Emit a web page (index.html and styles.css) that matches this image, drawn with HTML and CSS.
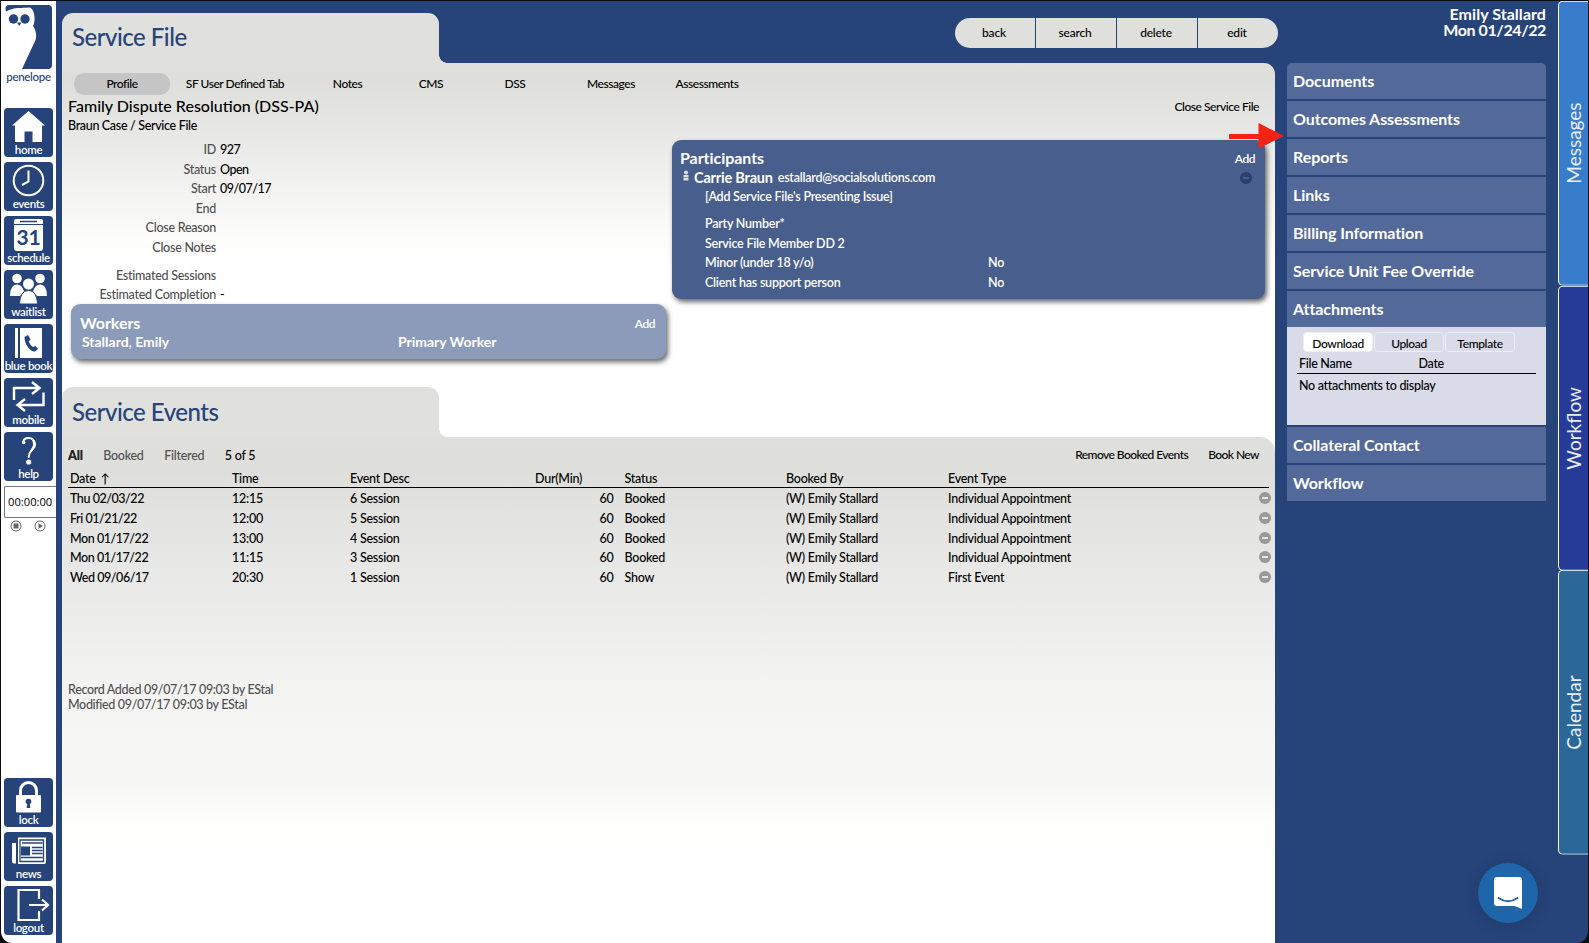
FILE: index.html
```html
<!DOCTYPE html>
<html lang="en">
<head>
  <meta charset="UTF-8" />
  <meta name="viewport" content="width=device-width, initial-scale=1.0" />
  <title>Penelope - Service File</title>
  <link rel="stylesheet" href="styles.css">
</head>
<body>
  <div class="app">
    <nav class="sidebar">
      <a class="logo">
        <svg width="48" height="65" viewBox="0 0 48 65">
          <path fill="#26437a" d="M4 0H43a4 4 0 0 1 4 4V60a4 4 0 0 1-4 4H17L30.500 35C32 31 31 25 28 21C30 18 30 11 28.500 7C27 3 25 2.500 24 2.500C18 3.500 9 1.500 1 6.500L0.500 4Q0.500 0 4 0Z"/>
          <circle cx="8.500" cy="14" r="4.700" fill="#26437a"/>
          <circle cx="20" cy="14" r="4.700" fill="#26437a"/>
          <path fill="#26437a" d="M12 17.500h4.500L14.200 21z"/>
        </svg>
        <span>penelope</span>
      </a>
      <div class="nav-group">
        <a class="nav-btn">
          <svg viewBox="0 0 49 49"><path fill="#fff" d="M24.500 3 41 17.500H38V34H28.500V23.500H20.500V34H11V17.500H8z"/></svg>
          <span>home</span>
        </a>
        <a class="nav-btn">
          <svg viewBox="0 0 49 49" fill="none" stroke="#fff" stroke-width="2"><circle cx="24.500" cy="18.500" r="14.800"/><path d="M24.500 8.500V19.500L18 23"/></svg>
          <span>events</span>
        </a>
        <a class="nav-btn">
          <svg viewBox="0 0 49 49"><path fill="#fff" d="M12 3H37Q39 3 39 5V8H10V5Q10 3 12 3ZM10 9H39V32Q39 35 36 35H13Q10 35 10 32Z"/><path stroke="#26437a" stroke-width="1.500" d="M16 5.500H33"/></svg>
          <b class="day">31</b>
          <span>schedule</span>
        </a>
        <a class="nav-btn">
          <svg viewBox="0 0 49 49" fill="#fff"><circle cx="13" cy="8.500" r="4.800"/><circle cx="36" cy="8.500" r="4.800"/><path d="M6 26Q6 14.500 13 14.500Q16.500 14.500 18 17Q19 19 20 21L16 26ZM43 26Q43 14.500 36 14.500Q32.500 14.500 31 17Q30 19 29 21L33 26Z"/><circle cx="24.500" cy="14" r="6.800" fill="#26437a"/><circle cx="24.500" cy="14" r="5.500"/><path stroke="#26437a" d="M15.500 34Q16 20.500 24.500 20.500Q33 20.500 33.500 34Z"/></svg>
          <span>waitlist</span>
        </a>
        <a class="nav-btn">
          <svg viewBox="0 0 49 49"><path fill="#fff" d="M11 4H14V34H11ZM16 4H38V34H16Z"/><path fill="#26437a" d="M20.500 13 24 11 26.500 15.500 24.700 17.500Q26 21 29 23L31.500 22 34 25 31 27.500Q28 28 24.500 24Q20.500 19 20.500 13Z"/></svg>
          <span>blue book</span>
        </a>
        <a class="nav-btn">
          <svg viewBox="0 0 49 49" fill="none" stroke="#fff" stroke-width="2.400"><path d="M10 22V10H35M28 4 35.500 10 28 16M39.500 14.500V27H14M21 21 13.500 27 21 33"/></svg>
          <span>mobile</span>
        </a>
        <a class="nav-btn">
          <svg viewBox="0 0 49 49"><path fill="none" stroke="#fff" stroke-width="2" stroke-linecap="round" d="M19 10.500Q19.500 6 24.500 6Q30.500 6 30.500 12C30.500 17.500 25 18 24.700 25"/><path fill="#fff" d="M28 6.500Q32 8.500 32 12.500C32 17.500 26.500 19 25 24C25.500 18.500 29 17 29 12Q29 8.500 27 6.500Z"/><circle cx="19.700" cy="10.500" r="1.800" fill="#fff"/><circle cx="24.700" cy="30" r="2.600" fill="#fff"/></svg>
          <span>help</span>
        </a>
      </div>
      <div class="timer">00:00:00</div>
      <div class="timer-controls">
        <svg width="12" height="12" viewBox="0 0 12 12"><circle cx="6" cy="6" r="5" fill="none" stroke="#666"/><path fill="#666" d="M3.500 3.500h5v5h-5z"/></svg>
        <svg width="12" height="12" viewBox="0 0 12 12"><circle cx="6" cy="6" r="5" fill="none" stroke="#666"/><path fill="#666" d="M4.500 3.300 9 6 4.500 8.700z"/></svg>
      </div>
      <div class="nav-group nav-bottom">
        <a class="nav-btn">
          <svg viewBox="0 0 49 49"><path fill="none" stroke="#fff" stroke-width="3" d="M16.500 18V12.500a8 8 0 0 1 16 0V18"/><rect x="12" y="17" width="25" height="17.500" rx="1" fill="#fff"/><circle cx="24.500" cy="23.500" r="2.800" fill="#26437a"/><path fill="#26437a" d="M23.500 24h2l.8 6h-3.600z"/></svg>
          <span>lock</span>
        </a>
        <a class="nav-btn">
          <svg viewBox="0 0 49 49"><path fill="#fff" d="M8 11h4v20.500H10Q8 31.500 8 29ZM14 5.500H42V30Q42 32 40 32H14Z"/><path stroke="#26437a" stroke-width="1.300" fill="none" d="M16 8H39.500V29.500H16ZM18 11H38.500M28 15.500H38.500M28 18.500H38.500M28 21.500H38.500M17 25.500H38.500"/><path fill="#26437a" d="M17 14.500h9v9h-9z"/></svg>
          <span>news</span>
        </a>
        <a class="nav-btn">
          <svg viewBox="0 0 49 49" fill="none" stroke="#fff" stroke-width="2.200"><path d="M35 13V4H14.500V34H35V25M25 19H43M38 13.500 44 19 38 24.500"/></svg>
          <span>logout</span>
        </a>
      </div>
    </nav>

    <main class="main">
      <header class="page-head">
        <div class="title-tab">Service File</div>
        <i class="notch"></i>
        <div class="toolbar">
          <button>back</button><button>search</button><button>delete</button><button>edit</button>
        </div>
      </header>

      <section class="profile">
        <div class="subtabs">
          <a class="active">Profile</a><a>SF User Defined Tab</a><a>Notes</a><a>CMS</a><a>DSS</a><a>Messages</a><a>Assessments</a>
        </div>
        <div class="name-row"><h1>Family Dispute Resolution (DSS-PA)</h1><a>Close Service File</a></div>
        <div class="crumbs">Braun Case / Service File</div>
        <div class="columns">
          <div class="left">
            <dl class="fields">
              <div><dt>ID</dt><dd>927</dd></div>
              <div><dt>Status</dt><dd>Open</dd></div>
              <div><dt>Start</dt><dd>09/07/17</dd></div>
              <div><dt>End</dt><dd></dd></div>
              <div><dt>Close Reason</dt><dd></dd></div>
              <div><dt>Close Notes</dt><dd></dd></div>
              <div class="spaced"><dt>Estimated Sessions</dt><dd></dd></div>
              <div><dt>Estimated Completion</dt><dd>-</dd></div>
            </dl>
            <div class="card workers">
              <div class="card-head"><h2>Workers</h2><a>Add</a></div>
              <div class="worker"><span>Stallard, Emily</span><span>Primary Worker</span></div>
            </div>
          </div>
          <div class="card participants">
            <div class="card-head"><h2>Participants</h2><a>Add</a></div>
            <div class="person">
              <svg width="6" height="11" viewBox="0 0 6 11"><circle cx="3" cy="2.500" r="2" fill="#ddd"/><path fill="#ddd" d="M.5 5h5v2.500h-5zM.5 8h5v2.500h-5z"/></svg>
              <b>Carrie Braun</b><span>estallard@socialsolutions.com</span><i class="remove dark"></i>
            </div>
            <div class="prow">[Add Service File's Presenting Issue]</div>
            <div class="prow spaced">Party Number*</div>
            <div class="prow">Service File Member DD 2</div>
            <div class="prow"><span>Minor (under 18 y/o)</span><span>No</span></div>
            <div class="prow"><span>Client has support person</span><span>No</span></div>
          </div>
        </div>
      </section>

      <div class="events-area">
        <div class="events-head">
          <div class="title-tab">Service Events</div>
          <i class="notch"></i>
        </div>
        <section class="events">
          <div class="filters">
            <b>All</b><a>Booked</a><a>Filtered</a><span>5 of 5</span>
            <div class="actions"><a>Remove Booked Events</a><a>Book New</a></div>
          </div>
          <div class="row head"><span>Date <em>↑</em></span><span>Time</span><span>Event Desc</span><span>Dur(Min)</span><span>Status</span><span>Booked By</span><span>Event Type</span></div>
          <div class="row"><span class="date">Thu 02/03/22</span><span>12:15</span><span>6 Session</span><span class="num">60</span><span>Booked</span><span>(W) Emily Stallard</span><span>Individual Appointment</span><i class="remove"></i></div>
          <div class="row"><span class="date">Fri 01/21/22</span><span>12:00</span><span>5 Session</span><span class="num">60</span><span>Booked</span><span>(W) Emily Stallard</span><span>Individual Appointment</span><i class="remove"></i></div>
          <div class="row"><span class="date">Mon 01/17/22</span><span>13:00</span><span>4 Session</span><span class="num">60</span><span>Booked</span><span>(W) Emily Stallard</span><span>Individual Appointment</span><i class="remove"></i></div>
          <div class="row"><span class="date">Mon 01/17/22</span><span>11:15</span><span>3 Session</span><span class="num">60</span><span>Booked</span><span>(W) Emily Stallard</span><span>Individual Appointment</span><i class="remove"></i></div>
          <div class="row"><span class="date">Wed 09/06/17</span><span>20:30</span><span>1 Session</span><span class="num">60</span><span>Show</span><span>(W) Emily Stallard</span><span>First Event</span><i class="remove"></i></div>
          <div class="audit">Record Added 09/07/17 09:03 by EStal<br>Modified 09/07/17 09:03 by EStal</div>
        </section>
      </div>
    </main>

    <aside class="panels">
      <div class="user">Emily Stallard<br><span>Mon 01/24/22</span></div>
      <div class="panel first">Documents</div>
      <div class="panel">Outcomes Assessments</div>
      <div class="panel">Reports</div>
      <div class="panel">Links</div>
      <div class="panel">Billing Information</div>
      <div class="panel">Service Unit Fee Override</div>
      <div class="panel open">Attachments</div>
      <div class="attachments">
        <div class="att-tabs"><a class="active">Download</a><a>Upload</a><a>Template</a></div>
        <div class="att-head"><span>File Name</span><span>Date</span></div>
        <div class="att-empty">No attachments to display</div>
      </div>
      <div class="panel">Collateral Contact</div>
      <div class="panel">Workflow</div>
    </aside>

    <div class="side-tabs">
      <a class="messages">Messages</a>
      <a class="workflow">Workflow</a>
      <a class="calendar">Calendar</a>
    </div>
  </div>

  <svg class="arrow" width="56" height="26" viewBox="0 0 56 26"><path fill="#f52314" d="M0 11h29.500V0L55 13 29.500 25.500V16H0z"/></svg>
  <div class="chat">
    <svg width="60" height="60" viewBox="0 0 60 60"><path fill="#fff" d="M19 14H41a3 3 0 0 1 3 3V46L36.500 43H19a3 3 0 0 1-3-3V17a3 3 0 0 1 3-3Z"/><path fill="none" stroke="#1f65aa" stroke-width="1.800" stroke-linecap="round" d="M20.500 35Q30 41.500 39.500 35"/></svg>
  </div>
</body>
</html>
```
FILE: styles.css
```css
:root {
  --blue: #26437a;
  --grey: #dfe0dc;
  --panel: #53699a;
}
* { box-sizing: border-box; }
body {
  margin: 0;
  background: #0b0b10;
  font-family: Lato, sans-serif;
  font-weight: 500;
  font-size: 12px;
  letter-spacing: -.3px;
  color: #000;
}
h1, h2, dl, dd { margin: 0; font-weight: inherit; }
em, i { font-style: normal; }
.app {
  display: flex;
  width: 1589px;
  height: 943px;
  border: 1px solid #0b0b10;
  border-bottom: 0;
  border-radius: 0 0 12px 12px;
  background: var(--blue);
  overflow: hidden;
}

/* left navigation */
.sidebar {
  width: 55px;
  height: 942px;
  background: #fff;
  padding: 4px 0 8px 3px;
  display: flex;
  flex-direction: column;
  flex: none;
}
.logo { height: 103px; margin-left: 1px; color: var(--blue); }
.logo svg { display: block; }
.logo span { display: block; width: 47px; text-align: center; line-height: 13px; font-size: 11.5px; }
.nav-group { display: flex; flex-direction: column; gap: 5px; }
.nav-btn {
  width: 49px;
  height: 49px;
  background: var(--blue);
  border-radius: 4px;
  color: #fff;
  display: grid;
}
.nav-btn > * { grid-area: 1 / 1; }
.nav-btn svg { width: 49px; height: 49px; }
.nav-btn span { place-self: end center; margin-bottom: 1px; font-size: 11.5px; line-height: 13px; font-weight: 600; white-space: nowrap; }
.day { color: var(--blue); font-size: 21px; line-height: 24px; text-align: center; margin-top: 9px; font-weight: 700; }
.timer {
  height: 32px;
  margin-top: 5px;
  border: 1px solid #77758a;
  border-right: 0;
  border-radius: 2px 0 0 2px;
  font: 500 11.2px/30px "Open Sans", sans-serif;
  letter-spacing: 0;
  padding-left: 3px;
}
.timer-controls { display: flex; gap: 12px; padding: 2px 0 0 6px; }
.nav-bottom { margin-top: auto; }

/* main column */
.main { width: 1213px; margin-left: 6px; flex: none; display: flex; flex-direction: column; }
.page-head { display: flex; height: 62px; padding-top: 12px; }
.title-tab {
  width: 377px;
  height: 50px;
  background: #e0e1dd;
  border-radius: 11px 11px 0 0;
  color: var(--blue);
  font-size: 24px;
  line-height: 47px;
  letter-spacing: -.5px;
  padding-left: 10px;
}
.notch {
  width: 8px;
  height: 8px;
  align-self: flex-end;
  background: radial-gradient(circle at 100% 0, transparent 7.5px, #e0e1dd 8px);
}
.toolbar { display: flex; gap: 1px; margin: 5px -3px 0 auto; height: 30px; }
.toolbar button {
  width: 80px;
  border: 0;
  background: var(--grey);
  font: inherit;
  letter-spacing: -.2px;
  padding: 0 2px 2px 0;
}
.toolbar button:first-child { border-radius: 15px 0 0 15px; }
.toolbar button:last-child { border-radius: 0 15px 15px 0; }
.profile {
  height: 324px;
  padding: 10px 10px 0 6px;
  border-radius: 0 11px 0 0;
  background: linear-gradient(#e0e1dd 0, #dedfda 18px, #e9e9e8 78px, #f2f2f1 125px, #fcfdf9 175px, #fff 200px);
}
.subtabs {
  display: grid;
  grid-template-columns: 96px 130px 95px 72px 96px 96px 96px;
  height: 20px;
  line-height: 22px;
  text-align: center;
  letter-spacing: -.45px;
  margin-left: 6px;
}
.subtabs .active { background: #c5c5c5; border-radius: 10px; }
.name-row { display: flex; justify-content: space-between; height: 26px; line-height: 26px; padding-right: 6px; }
.name-row h1 { font-size: 16px; letter-spacing: 0; }
.name-row a { line-height: 28px; letter-spacing: -.45px; }
.crumbs { font-size: 12.500px; line-height: 14px; height: 14px; letter-spacing: -.33px; }
.columns { display: flex; justify-content: space-between; padding: 7px 0 0 3px; }
.left { width: 595px; }
.fields { font-size: 12.500px; height: 164px; }
.fields > div { display: flex; gap: 4px; height: 19.600px; line-height: 19px; }
.fields .spaced { margin-top: 8px; }
dt { width: 145px; text-align: right; color: #505050; white-space: nowrap; letter-spacing: -.26px; }
dd { letter-spacing: -.48px; }
.card { border-radius: 9px; color: #fff; box-shadow: 2px 3px 5px rgba(0,0,0,.6); font-weight: 600; }
.card-head { display: flex; justify-content: space-between; height: 20px; line-height: 20px; }
.card-head h2 { font-size: 16px; font-weight: 700; letter-spacing: -.05px; }
.card-head a { line-height: 22px; letter-spacing: -.5px; }
.workers { height: 55px; background: #8c9bba; padding: 9px 11px 0 9px; }
.worker { display: flex; font-size: 14px; font-weight: 700; letter-spacing: -.02px; line-height: 18px; padding-left: 2px; }
.worker span:first-child { width: 316px; }
.participants { width: 593px; height: 159px; background: #485e8c; padding: 8px 10px 0 8px; }
.person { display: flex; align-items: center; height: 19px; font-size: 12.500px; letter-spacing: -.25px; }
.person svg { margin: -4px 5px 0 3px; }
.person b { font-size: 14.500px; font-weight: 700; letter-spacing: -.2px; margin-right: 5px; }
.prow { display: flex; font-size: 12.500px; line-height: 19.800px; padding-left: 25px; letter-spacing: -.24px; }
.prow.spaced { margin-top: 7px; }
.prow span:first-child { width: 283px; }
.remove {
  width: 12px;
  height: 12px;
  border-radius: 50%;
  background: linear-gradient(#e6e6e6, #e6e6e6) center / 6px 2px no-repeat #999;
}
.remove.dark { margin-left: auto; margin-right: 3px; background: linear-gradient(#485e8c, #485e8c) center / 6px 2px no-repeat #2d3f68; }

.events-area { flex: 1; background: #fff; display: flex; flex-direction: column; }
.events-head { display: flex; }
.events-head .title-tab { line-height: 49px; }
.events {
  flex: 1;
  padding: 9px 6px 0;
  border-radius: 0 15px 0 0;
  background: linear-gradient(#dfe0db 0, #dedfda 35px, #e3e3e1 80px, #eaeae9 155px, #f3f3f2 245px, #f8f8f6 350px, #fdfefa 385px, #fff 420px);
}
.filters { display: flex; gap: 20.500px; height: 20px; line-height: 20px; font-size: 12.500px; letter-spacing: -.25px; color: #505050; }
.filters b { color: #222; font-weight: 800; }
.filters span { color: #000; }
.actions { margin-left: auto; display: flex; gap: 20px; color: #000; font-size: 12px; line-height: 18px; letter-spacing: -.56px; padding-right: 10px; }
.row {
  display: grid;
  grid-template-columns: 162px 118px 185px 89.500px 161.500px 162px 1fr 12px;
  align-items: center;
  font-size: 12.500px;
  letter-spacing: -.25px;
  height: 19.700px;
  padding-left: 2px;
  margin-right: -2px;
}
.row .date { letter-spacing: -.45px; }
.row .num { text-align: right; padding-right: 11px; }
.row .remove { margin-top: -1px; }
.row.head { height: 22px; padding-top: 4px; border-bottom: 1px solid #000; margin: 0 0 1px; }
.row.head em { margin-left: 2px; }
.audit { color: #505050; font-size: 12.500px; line-height: 15px; margin-top: 95px; letter-spacing: -.34px; }

/* right column */
.panels { width: 259px; margin-left: 12px; flex: none; display: flex; flex-direction: column; gap: 2px; color: #fff; font-weight: 700; }
.user { height: 60px; padding-top: 5px; text-align: right; font-size: 16px; line-height: 16px; letter-spacing: .05px; }
.user span { letter-spacing: -.4px; }
.panel { height: 36px; background: var(--panel); padding-left: 6px; font-size: 16px; line-height: 35px; letter-spacing: -.08px; }
.panel.first { border-radius: 5px 5px 0 0; }
.panel.open { margin-bottom: -2px; }
.attachments { height: 98px; background: #d9dce8; color: #000; padding: 5px 10px 0; font-weight: 500; }
.att-tabs { display: flex; gap: 1px; padding-left: 6px; text-align: center; letter-spacing: -.35px; }
.att-tabs a { width: 70px; height: 20px; line-height: 21px; border: 1px solid #eceef5; border-radius: 4px; }
.att-tabs .active { background: #fff; }
.att-head { display: flex; font-size: 12.500px; height: 22px; line-height: 24px; border-bottom: 1px solid #000; padding-left: 2px; }
.att-head span:first-child { width: 119.500px; }
.att-empty { font-size: 12.500px; line-height: 23px; padding-left: 2px; }

.side-tabs { width: 30px; margin-left: 12px; flex: none; }
.side-tabs a {
  display: flex;
  align-items: center;
  justify-content: center;
  width: 30px;
  height: 284.700px;
  border: 1px solid #fff;
  border-left: 0;
  border-radius: 0 5px 5px 0;
  color: #e8eef8;
  font-size: 19px;
  font-weight: 400;
  letter-spacing: 0;
  writing-mode: vertical-rl;
  transform: rotate(180deg);
}
.messages { background: #377dcb; }
.workflow { background: #273b98; }
.calendar { background: #2b6799; }

/* overlays */
.arrow { position: absolute; left: 1229px; top: 123px; }
.chat {
  position: absolute;
  left: 1478px;
  top: 863px;
  width: 60px;
  height: 60px;
  border-radius: 50%;
  background: #1f65aa;
  box-shadow: 0 2px 16px rgba(0,0,0,.15);
}
```
